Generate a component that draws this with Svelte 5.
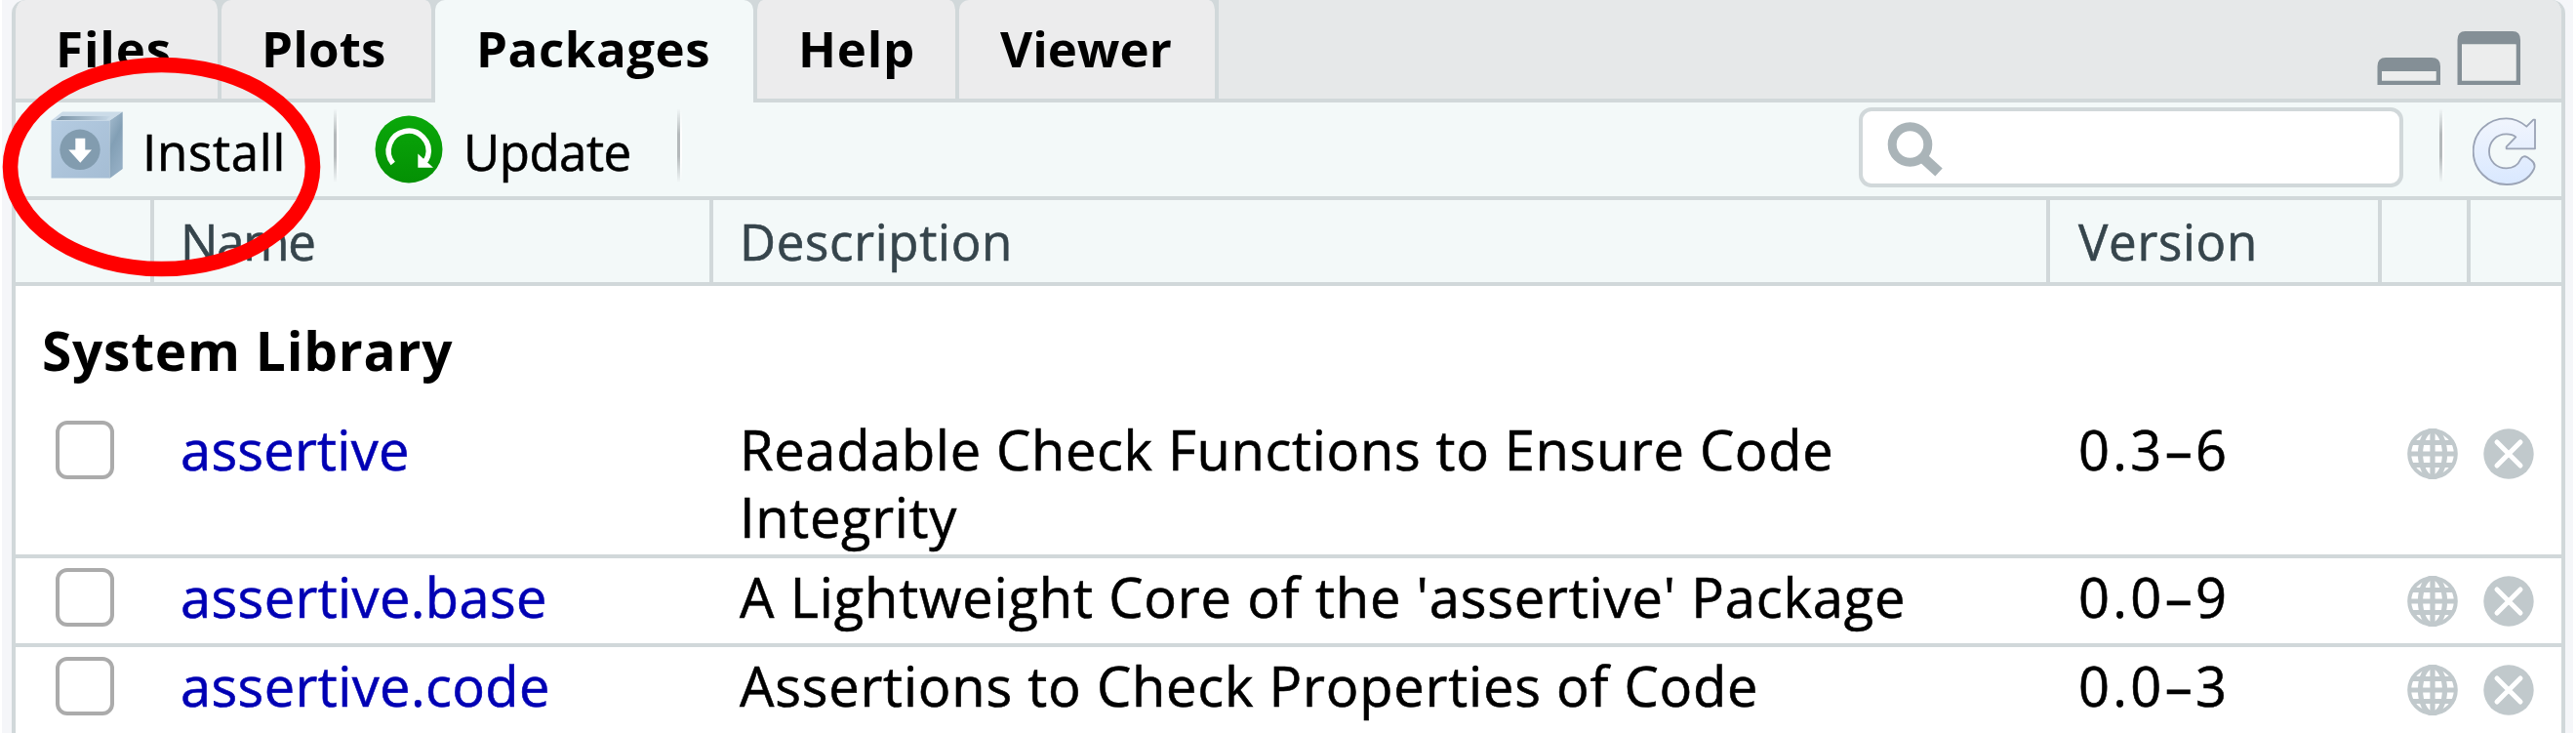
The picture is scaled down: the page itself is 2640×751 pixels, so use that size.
<script>
  const tabs = [
    { label: 'Files', width: 211, pad: 41, ls: 0.9, side: 'right' },
    { label: 'Plots', width: 219, pad: 41, ls: 0.2, side: 'right' },
    { label: 'Packages', width: 326, pad: 42, ls: 0.55, side: 'active' },
    { label: 'Help', width: 211, pad: 42, ls: 0.8, side: 'both' },
    { label: 'Viewer', width: 266, pad: 42, ls: 0, side: 'right' }
  ];

  const packages = [
    { name: 'assertive', description: 'Readable Check Functions to Ensure Code Integrity', version: '0.3–6', height: 151, nls: 0.26, dls: 0.68 },
    { name: 'assertive.base', description: "A Lightweight Core of the 'assertive' Package", version: '0.0–9', height: 91, nls: 0.38, dls: 0.85 },
    { name: 'assertive.code', description: 'Assertions to Check Properties of Code', version: '0.0–3', height: 92, nls: 0.4, dls: 0.8 }
  ];
</script>

<div class="page">
  <div class="panel">
    <nav class="tabs">
      {#each tabs as tab}
        <div class="tab {tab.side}" style="width:{tab.width}px;padding-left:{tab.pad}px;letter-spacing:{tab.ls}px">{tab.label}</div>
      {/each}
      <div class="strip">
        <svg width="66" height="57" viewBox="0 0 66 57">
          <path fill="#848f96" fill-rule="evenodd" d="M0.5 57V38Q0.5 29 9 29H56Q65 29 65 38V57ZM5 43V52.5H60.5V43Z" />
          <path fill="#eceded" d="M5 43H60.5V52.5H5Z" />
        </svg>
        <svg width="66" height="57" viewBox="0 0 66 57">
          <path fill="#848f96" fill-rule="evenodd" d="M0.5 57V11Q0.5 2 8.500 2H57Q65 2 65 11V57ZM5 15.500V52.500H60.500V15.500Z" />
          <path fill="#eceded" d="M5 15.500H60.500V52.500H5Z" />
        </svg>
      </div>
    </nav>

    <div class="toolbar">
      <button class="tool install">
        <svg width="76" height="72" viewBox="51 112 76 72">
          <defs>
            <linearGradient id="face" x1="0" y1="0" x2="1" y2="1"><stop offset="0" stop-color="#b4cbe1" /><stop offset="1" stop-color="#a5bdd4" /></linearGradient>
            <linearGradient id="side" x1="0" y1="0" x2="0.4" y2="1"><stop offset="0" stop-color="#a6bdd0" /><stop offset="0.5" stop-color="#829fb5" /><stop offset="1" stop-color="#94aec4" /></linearGradient>
            <linearGradient id="lid" x1="0" y1="0" x2="1" y2="0"><stop offset="0" stop-color="#7892a5" /><stop offset="1" stop-color="#c6d7e6" /></linearGradient>
          </defs>
          <path fill="#cbdbe8" d="M52.500 123.500L64 114.500H125.500L112.500 123.500Z" />
          <path fill="url(#lid)" d="M57 123L63 119H113L109 123Z" />
          <path fill="url(#face)" d="M52.500 123.500H112.500V182.500H52.500Z" />
          <path fill="url(#side)" d="M112.500 123.500L125.700 114.500V173L112.500 182.700Z" />
          <circle cx="82" cy="153.300" r="20.700" fill="#829caf" />
          <path fill="#fff" d="M77.300 141.700H87.300V153.500H94L82.300 166.800L70.300 153.500H77.300Z" />
        </svg>
        <span>Install</span>
      </button>
      <i class="sep"></i>
      <button class="tool update">
        <svg width="70" height="70" viewBox="0 0 70 70">
          <defs><linearGradient id="green" x1="0" y1="0" x2="0" y2="1"><stop offset="0" stop-color="#0aa80a" /><stop offset="1" stop-color="#049004" /></linearGradient></defs>
          <circle cx="35" cy="35" r="34.500" fill="url(#green)" />
          <path d="M18.700 49.500A20.500 20.500 0 1 1 54.500 42Q53.500 46 50 49" fill="none" stroke="#fff" stroke-width="5.500" />
          <path d="M44.300 39.500V53.700H60Z" fill="#fff" />
        </svg>
        <span>Update</span>
      </button>
      <i class="sep"></i>
      <div class="search">
        <svg width="50" height="64" viewBox="0 0 50 64">
          <circle cx="26.500" cy="26" r="18.300" fill="none" stroke="#aab4b8" stroke-width="9" />
          <path d="M39 39L56 54.500" stroke="#aab4b8" stroke-width="11" />
        </svg>
      </div>
      <i class="sep last"></i>
      <svg class="refresh" width="66" height="71" viewBox="43 61 198 213">
        <defs><linearGradient id="ice" x1="0" y1="0" x2="0" y2="1"><stop offset="0" stop-color="#f1f5fd" /><stop offset="1" stop-color="#d9e8ff" /></linearGradient></defs>
        <path fill="url(#ice)" stroke="#9ba4b6" stroke-width="5.500" stroke-linejoin="round" d="M235 69V158H147V152L176 122C168 115 158 113 147 113C115 113 94 137 94 167C94 197 117 218 147 218C170 218 184 206 191 190C196 180 204 180 212 185L224 194C234 202 236 210 232 220C217 252 185 269 147 268C90 268 45 222 45 166C45 108 90 65 147 65C173 65 192 75 209 90L230 69Z" />
      </svg>
    </div>

    <div class="grid head">
      <div></div>
      <div class="name">Name</div>
      <div class="desc">Description</div>
      <div class="ver">Version</div>
      <div></div>
      <div></div>
    </div>

    <h2>System Library</h2>

    {#each packages as p}
      <div class="grid row" style="height:{p.height}px">
        <div><span class="check"></span></div>
        <div class="name" style="letter-spacing:{p.nls}px">{p.name}</div>
        <div class="desc" style="letter-spacing:{p.dls}px">{p.description}</div>
        <div class="ver">{p.version}</div>
        <div>
          <svg class="globe" width="52" height="52" viewBox="0 0 52 52" fill="none" stroke="#c1c9cc">
            <circle cx="26" cy="26" r="23.800" stroke-width="4" />
            <path stroke-width="5.200" d="M26 2V50M2 26H50M6 14.500H46M6 37.500H46" />
            <ellipse cx="26" cy="26" rx="12.500" ry="24" stroke-width="5.200" />
          </svg>
        </div>
        <div>
          <svg class="remove" width="52" height="52" viewBox="0 0 52 52">
            <circle cx="26" cy="26" r="25.700" fill="#c1c9cc" />
            <path stroke="#fff" stroke-width="5" stroke-linecap="round" d="M14 14L38 38M38 14L14 38" />
          </svg>
        </div>
      </div>
    {/each}
  </div>

  <svg class="marker" width="330" height="228" viewBox="0 0 330 228">
    <ellipse cx="164.500" cy="114" rx="155" ry="104.500" fill="none" stroke="#f00" stroke-width="15.600" />
  </svg>
</div>

<style>
  :global(body) { margin: 0; background: #fff; overflow: hidden; }
  .page {
    position: relative; box-sizing: border-box; width: 2635px; height: 751px; margin-left: 2px;
    padding: 0 7px 0 10px; background: #f5f6f9; overflow: hidden;
    font-family: "Open Sans", "Noto Sans", sans-serif; color: #000;
  }
  .panel {
    box-sizing: border-box; width: 2617px; height: 760px; background: #fff;
    border: 4px solid #d1d8da; border-top: 0; border-radius: 14px 14px 0 0; overflow: hidden;
  }
  .tabs { display: flex; height: 105px; background: #d1d8da; }
  .tab {
    box-sizing: border-box; height: 105px; border: 0 solid #d1d8da; border-bottom-width: 4px;
    background: #ececed; background-clip: padding-box; border-radius: 10px 10px 0 0;
    font-size: 51px; font-weight: 700; line-height: 98px; white-space: nowrap;
  }
  .tab.right { border-right-width: 4px; }
  .tab.both { border-left-width: 4px; border-right-width: 4px; }
  .tab.active { border: 0; background: #f3f9f9; }
  .strip {
    flex: 1; box-sizing: border-box; display: flex; justify-content: flex-end; gap: 16px;
    padding: 30px 41px 0 0; border-bottom: 4px solid #d1d8da; background: #e6e8e9;
  }
  .toolbar {
    box-sizing: border-box; display: flex; align-items: flex-start; height: 100px; padding-left: 35px;
    border-bottom: 4px solid #d1d8da; background: #f3f9f9;
  }
  .tool {
    display: flex; align-items: flex-start; padding: 0; border: 0; background: none;
    font: 400 51px/70px "Open Sans", "Noto Sans", sans-serif; color: #000; text-align: left;
    -webkit-text-stroke: 0.6px currentColor;
  }
  .tool span { white-space: nowrap; margin-top: 15px; }
  .install { width: 291px; letter-spacing: 0.7px; }
  .install svg { margin: 7px 19px 0 0; }
  .update { width: 310px; letter-spacing: -0.5px; }
  .update svg { margin: 13px 21px 0 0; }
  .sep {
    width: 5px; height: 76px; margin: 6px 37px 0 0;
    background: linear-gradient(90deg, #b4b9bb 0 3px, #fff 3px);
    -webkit-mask-image: linear-gradient(transparent, #000 35%, #000 65%, transparent);
    mask-image: linear-gradient(transparent, #000 35%, #000 65%, transparent);
  }
  .search {
    box-sizing: border-box; width: 558px; height: 82px; margin: 5px 37px 0 auto;
    padding: 8px 0 0 22px; border: 4px solid #d1d8da; border-radius: 13px; background: #fff;
  }
  .search svg { display: block; overflow: visible; }
  .sep.last { margin-right: 29px; }
  .refresh { margin: 15px 25px 0 0; }

  .grid { display: grid; grid-template-columns: 142px 573px 1370px 340px 91px 92px; box-sizing: border-box; border-bottom: 4px solid #d1d8da; }
  .head { height: 88px; background: #f3f9f9; color: #36454c; font-size: 51px; line-height: 84px; }
  .head div { box-sizing: border-box; border-right: 4px solid #d1d8da; }
  .head div:last-child { border-right: 0; }
  .head, .row { -webkit-text-stroke: 0.6px currentColor; }
  .head .name { letter-spacing: -1.2px; }
  .head .desc, .head .ver { letter-spacing: 0.7px; }
  .name { padding-left: 27px; }
  .desc { padding-left: 27px; }
  .ver { padding-left: 29px; }
  h2 { box-sizing: border-box; height: 128px; margin: 0; padding: 31px 0 0 27px; font-size: 55px; line-height: 70px; font-weight: 700; letter-spacing: 0.75px; }
  .row { padding-top: 5px; font-size: 56px; line-height: 69px; }
  .row .name { color: #0000b4; }
  .row .desc { padding-right: 90px; }
  .row .ver { letter-spacing: 3.3px; }
  .check { display: block; box-sizing: border-box; width: 60px; height: 60px; margin: 5px 0 0 41px; border: 4px solid #ababab; border-radius: 12px; background: #fff; }
  .globe { display: block; margin: 13px 0 0 26px; }
  .remove { display: block; margin: 13px 0 0 13px; }
  .marker { position: absolute; left: -1px; top: 57px; }
</style>
